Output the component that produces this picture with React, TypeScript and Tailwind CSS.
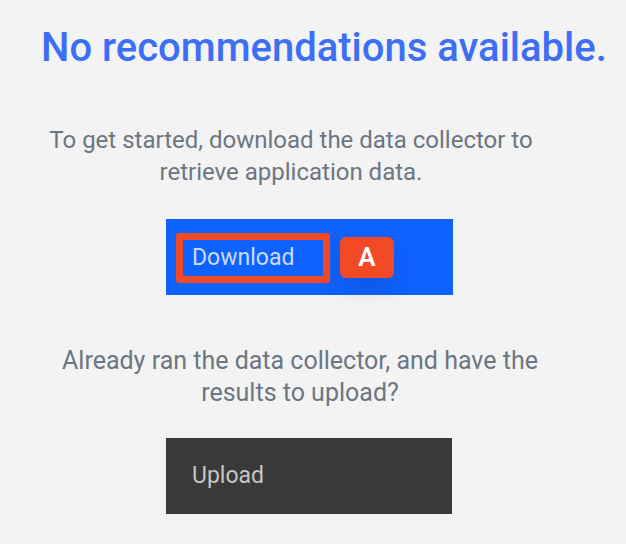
export default function App() {
  return (
    <div
      className="w-[626px] h-[544px] bg-[#f3f3f3] overflow-hidden"
      style={{ fontFamily: "Roboto, 'Noto Sans', sans-serif" }}
    >
      <h1 className="pt-[26px] pl-[41px] text-[40px] leading-[44px] font-medium text-[#3d6ff5] whitespace-nowrap">
        No recommendations available.
      </h1>

      <p className="mt-[54px] ml-[40px] w-[502px] text-center text-[24px] leading-[32px] text-[#6c7681]">
        To get started, download the data collector to retrieve application data.
      </p>

      <div className="mt-[31px] ml-[166px] w-[287px] h-[76px] bg-[#0f62fe] flex items-start pt-[14px] pl-[10px] gap-[10px]">
        <div className="w-[154px] h-[50px] border-[7px] border-[#f24a26] rounded-[3px] flex items-center pl-[9px] text-[23px] text-[#c9dcff]">
          Download
        </div>
        <div className="mt-[4px] w-[54px] h-[41px] rounded-[6px] bg-[#f24a26] text-white text-[26px] font-semibold flex items-center justify-center shadow-[0_10px_25px_rgba(0,0,0,0.12)]">
          A
        </div>
      </div>

      <p className="mt-[50px] ml-[50px] w-[500px] text-center text-[25px] leading-[32px] text-[#6c7681]">
        Already ran the data collector, and have the results to upload?
      </p>

      <div className="mt-[29px] ml-[166px] w-[286px] h-[76px] bg-[#393939] flex items-center pl-[26px] text-[23px] text-[#c6c6c6]">
        Upload
      </div>
    </div>
  );
}
